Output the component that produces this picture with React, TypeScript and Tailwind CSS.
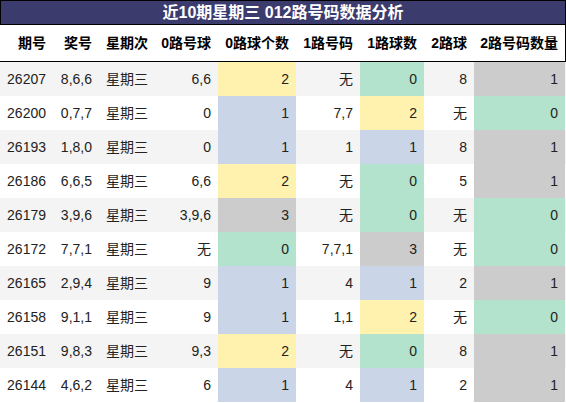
const heads = ['期号', '奖号', '星期次', '0路号球', '0路球个数', '1路号码', '1路球数', '2路球', '2路号码数量']

const Y = 'bg-[#fff2ae]'
const B = 'bg-[#cbd5e8]'
const G = 'bg-[#b3e2cd]'
const K = 'bg-[#cccccc]'

const c0: Record<string, string> = { '0': G, '1': B, '2': Y, '3': K }
const c2: Record<string, string> = { '0': G, '1': K }

const rows = [
  ['26207', '8,6,6', '星期三', '6,6', '2', '无', '0', '8', '1'],
  ['26200', '0,7,7', '星期三', '0', '1', '7,7', '2', '无', '0'],
  ['26193', '1,8,0', '星期三', '0', '1', '1', '1', '8', '1'],
  ['26186', '6,6,5', '星期三', '6,6', '2', '无', '0', '5', '1'],
  ['26179', '3,9,6', '星期三', '3,9,6', '3', '无', '0', '无', '0'],
  ['26172', '7,7,1', '星期三', '无', '0', '7,7,1', '3', '无', '0'],
  ['26165', '2,9,4', '星期三', '9', '1', '4', '1', '2', '1'],
  ['26158', '9,1,1', '星期三', '9', '1', '1,1', '2', '无', '0'],
  ['26151', '9,8,3', '星期三', '9,3', '2', '无', '0', '8', '1'],
  ['26144', '4,6,2', '星期三', '6', '1', '4', '1', '2', '1'],
]

const cols = 'grid grid-cols-[53px_46px_56px_63px_78px_64px_64px_50px_91px]'

export default function App() {
  return (
    <div
      className="w-[566px] h-[403px] bg-white text-[14px] text-[#222]"
      style={{ fontFamily: '"Liberation Sans", "Noto Sans CJK SC", sans-serif' }}
    >
      <div className="h-[25px] border border-black bg-[#3c3b6e] text-white font-bold text-[16px] flex items-center justify-center">
        近10期星期三 012路号码数据分析
      </div>
      <div className={`${cols} h-[37px] w-[566px] border-b border-r border-black font-bold text-black`}>
        {heads.map((h) => (
          <div key={h} className="flex items-center justify-end pr-[7px]">
            {h}
          </div>
        ))}
      </div>
      {rows.map((r, i) => (
        <div key={r[0]} className={`${cols} h-[34px] ${i % 2 === 0 ? 'bg-[#f4f4f4]' : 'bg-white'}`}>
          {r.map((v, j) => {
            let bg = ''
            if (j === 4 || j === 6) bg = c0[v]
            if (j === 8) bg = c2[v]
            return (
              <div key={j} className={`flex items-center justify-end pr-[7px] ${bg}`}>
                {v}
              </div>
            )
          })}
        </div>
      ))}
    </div>
  )
}
